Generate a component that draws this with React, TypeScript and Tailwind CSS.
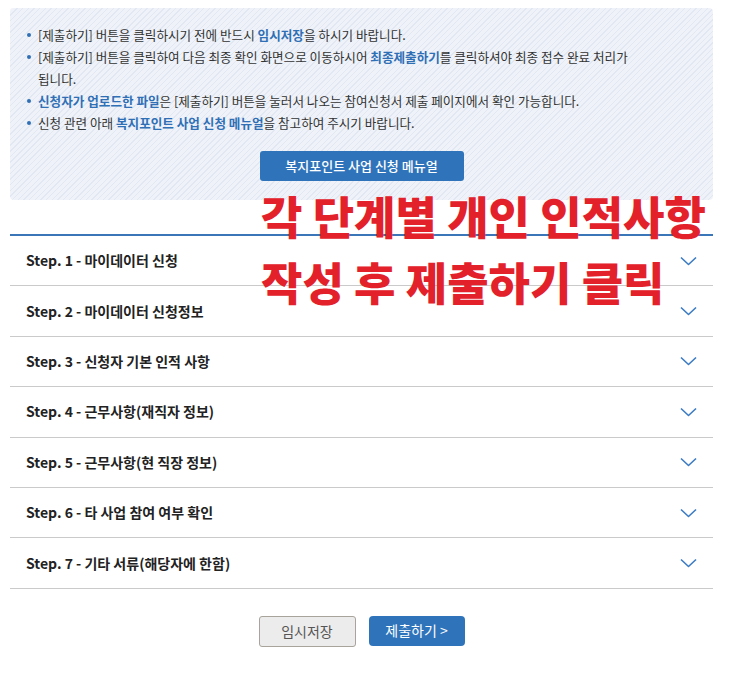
import React from 'react';

const steps = [
  'Step. 1 - 마이데이터 신청',
  'Step. 2 - 마이데이터 신청정보',
  'Step. 3 - 신청자 기본 인적 사항',
  'Step. 4 - 근무사항(재직자 정보)',
  'Step. 5 - 근무사항(현 직장 정보)',
  'Step. 6 - 타 사업 참여 여부 확인',
  'Step. 7 - 기타 서류(해당자에 한함)',
];

function Chevron() {
  return (
    <svg width="17" height="10" viewBox="0 0 17 10" fill="none">
      <polyline points="1,1.5 8.5,8.5 16,1.5" stroke="#3b7bc4" strokeWidth="1.6" strokeLinejoin="round" />
    </svg>
  );
}

function Bullet({ children }: { children: React.ReactNode }) {
  return (
    <li className="flex items-start">
      <span className="mt-[9px] mr-[7px] h-[4px] w-[4px] shrink-0 rounded-full bg-[#2f6fb5]" />
      <span>{children}</span>
    </li>
  );
}

const hl = 'font-bold text-[#2f6fb5]';

export default function App() {
  return (
    <div className="relative min-h-[682px] bg-white font-['Noto_Sans_CJK_KR',sans-serif] text-[#333]">
      <div className="ml-[10px] w-[703px] pt-[8px]">
        {/* 안내 박스 */}
        <div className="rounded-[4px] bg-[repeating-linear-gradient(-45deg,#eff3f9_0px,#eff3f9_3px,#e2e8f1_3px,#e2e8f1_4px)] pb-[19px] pl-[17px] pr-[20px] pt-[16px]">
          <ul className="text-[12.6px] leading-[22px] text-[#333]">
            <Bullet>
              [제출하기] 버튼을 클릭하시기 전에 반드시 <span className={hl}>임시저장</span>을 하시기 바랍니다.
            </Bullet>
            <Bullet>
              [제출하기] 버튼을 클릭하여 다음 최종 확인 화면으로 이동하시어 <span className={hl}>최종제출하기</span>를 클릭하셔야 최종 접수 완료 처리가
              <br />
              됩니다.
            </Bullet>
            <Bullet>
              <span className={hl}>신청자가 업로드한 파일</span>은 [제출하기] 버튼을 눌러서 나오는 참여신청서 제출 페이지에서 확인 가능합니다.
            </Bullet>
            <Bullet>
              신청 관련 아래 <span className={hl}>복지포인트 사업 신청 메뉴얼</span>을 참고하여 주시기 바랍니다.
            </Bullet>
          </ul>
          <div className="mt-[17px] flex justify-center pl-[3px]">
            <button
              type="button"
              className="h-[30px] w-[204px] rounded-[3px] bg-[#2f74bb] text-[13px] font-medium text-white"
            >
              복지포인트 사업 신청 메뉴얼
            </button>
          </div>
        </div>

        {/* 단계 목록 */}
        <div className="mt-[34px] border-t-2 border-[#3a76b8]">
          {steps.map((s) => (
            <div
              key={s}
              className="flex h-[50.4px] items-center justify-between border-b border-[#cacaca] pl-[16px] pr-[16px]"
            >
              <span className="text-[14px] font-semibold text-[#222]">{s}</span>
              <Chevron />
            </div>
          ))}
        </div>

        {/* 하단 버튼 */}
        <div className="mt-[27px] flex justify-center gap-[13px]">
          <button
            type="button"
            className="h-[31px] w-[97px] rounded-[3px] border border-[#a8a39b] bg-[#ececec] text-[14px] text-[#555]"
          >
            임시저장
          </button>
          <button
            type="button"
            className="h-[30px] w-[96px] rounded-[4px] bg-[#2f74bb] text-[14px] text-white"
          >
            제출하기 &gt;
          </button>
        </div>
      </div>

      {/* 빨간 안내 문구 */}
      <div className="absolute left-[261px] top-[183px] text-[45px] font-extrabold leading-[66px] text-[#e3212b]">
        <div>각 단계별 개인 인적사항</div>
        <div>작성 후 제출하기 클릭</div>
      </div>
    </div>
  );
}
